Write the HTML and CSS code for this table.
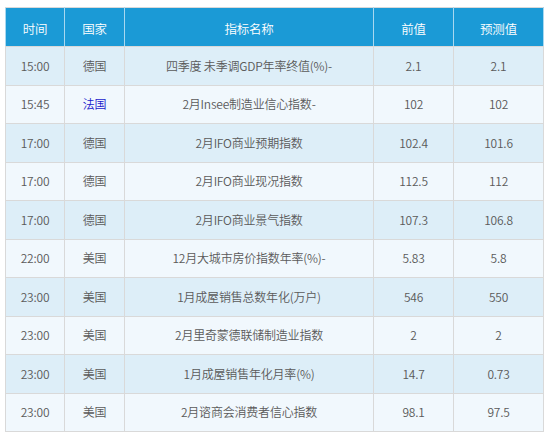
FILE: index.html
```html
<!DOCTYPE html>
<html lang="zh">
<head>
<meta charset="utf-8">
<link rel="stylesheet" href="styles.css">
</head>
<body>
<div class="wrap">
<table class="cal">
<colgroup>
<col class="c-time"><col class="c-country"><col class="c-name"><col class="c-prev"><col class="c-fc">
</colgroup>
<thead>
<tr><th>时间</th><th>国家</th><th>指标名称</th><th>前值</th><th>预测值</th></tr>
</thead>
<tbody>
<tr><td>15:00</td><td>德国</td><td>四季度 未季调GDP年率终值(%)-</td><td>2.1</td><td>2.1</td></tr>
<tr><td>15:45</td><td class="link">法国</td><td>2月Insee制造业信心指数-</td><td>102</td><td>102</td></tr>
<tr><td>17:00</td><td>德国</td><td>2月IFO商业预期指数</td><td>102.4</td><td>101.6</td></tr>
<tr><td>17:00</td><td>德国</td><td>2月IFO商业现况指数</td><td>112.5</td><td>112</td></tr>
<tr><td>17:00</td><td>德国</td><td>2月IFO商业景气指数</td><td>107.3</td><td>106.8</td></tr>
<tr><td>22:00</td><td>美国</td><td>12月大城市房价指数年率(%)-</td><td>5.83</td><td>5.8</td></tr>
<tr><td>23:00</td><td>美国</td><td>1月成屋销售总数年化(万户)</td><td>546</td><td>550</td></tr>
<tr><td>23:00</td><td>美国</td><td>2月里奇蒙德联储制造业指数</td><td>2</td><td>2</td></tr>
<tr><td>23:00</td><td>美国</td><td>1月成屋销售年化月率(%)</td><td>14.7</td><td>0.73</td></tr>
<tr><td>23:00</td><td>美国</td><td>2月谘商会消费者信心指数</td><td>98.1</td><td>97.5</td></tr>
</tbody>
</table>
</div>
</body>
</html>
```
FILE: styles.css
```css
html, body {
  margin: 0;
  padding: 0;
  background: #ffffff;
}
.wrap {
  padding: 7px 8px 0 5px;
}
.cal {
  border-collapse: collapse;
  table-layout: fixed;
  width: 538px;
  font-family: "Noto Sans CJK SC", "Noto Sans", sans-serif;
  font-weight: 350;
  font-size: 12px;
  letter-spacing: -0.2px;
  color: #5a5a5a;
  border: 1px solid #d9d9d9;
}
.c-time { width: 59px; }
.c-country { width: 60px; }
.c-name { width: 249px; }
.c-prev { width: 80px; }
.c-fc { width: 90px; }
.cal th, .cal td {
  text-align: center;
  padding: 0;
  line-height: 16px;
}
.cal th {
  background: #1b9ad6;
  color: #ffffff;
  font-weight: 350;
  font-size: 12.5px;
  height: 35px;
  padding-top: 3px;
  border: 1px solid #d9d9d9;
  border-left-color: #a9d8f0;
  border-right-color: #a9d8f0;
}
.cal td {
  height: 37.5px;
  border: 1px solid #d9d9d9;
}
.cal tbody tr:nth-child(odd) td { background: #ddeef8; }
.cal tbody tr:nth-child(even) td { background: #f1f8fd; }
.cal td.link { color: #1a1acc; }
```
